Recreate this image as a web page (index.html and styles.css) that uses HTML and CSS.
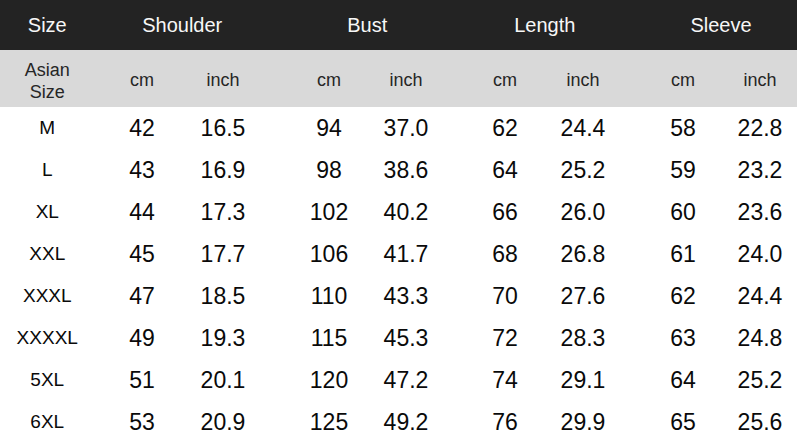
FILE: index.html
```html
<!DOCTYPE html>
<html>
<head>
<meta charset="utf-8">
<link rel="stylesheet" href="styles.css">
</head>
<body>
<div class="table">
  <div class="row head">
    <div class="c">Size</div>
    <div class="c span g1">Shoulder</div>
    <div class="c span g2">Bust</div>
    <div class="c span g3">Length</div>
    <div class="c span g4">Sleeve</div>
  </div>
  <div class="row units">
    <div class="c asian">Asian<br>Size</div>
    <div class="c">cm</div><div class="c">inch</div>
    <div class="c">cm</div><div class="c">inch</div>
    <div class="c">cm</div><div class="c">inch</div>
    <div class="c">cm</div><div class="c">inch</div>
  </div>
  <div class="row data"><div class="c sz">M</div><div class="c">42</div><div class="c">16.5</div><div class="c">94</div><div class="c">37.0</div><div class="c">62</div><div class="c">24.4</div><div class="c">58</div><div class="c">22.8</div></div>
  <div class="row data"><div class="c sz">L</div><div class="c">43</div><div class="c">16.9</div><div class="c">98</div><div class="c">38.6</div><div class="c">64</div><div class="c">25.2</div><div class="c">59</div><div class="c">23.2</div></div>
  <div class="row data"><div class="c sz">XL</div><div class="c">44</div><div class="c">17.3</div><div class="c">102</div><div class="c">40.2</div><div class="c">66</div><div class="c">26.0</div><div class="c">60</div><div class="c">23.6</div></div>
  <div class="row data"><div class="c sz">XXL</div><div class="c">45</div><div class="c">17.7</div><div class="c">106</div><div class="c">41.7</div><div class="c">68</div><div class="c">26.8</div><div class="c">61</div><div class="c">24.0</div></div>
  <div class="row data"><div class="c sz">XXXL</div><div class="c">47</div><div class="c">18.5</div><div class="c">110</div><div class="c">43.3</div><div class="c">70</div><div class="c">27.6</div><div class="c">62</div><div class="c">24.4</div></div>
  <div class="row data"><div class="c sz">XXXXL</div><div class="c">49</div><div class="c">19.3</div><div class="c">115</div><div class="c">45.3</div><div class="c">72</div><div class="c">28.3</div><div class="c">63</div><div class="c">24.8</div></div>
  <div class="row data"><div class="c sz">5XL</div><div class="c">51</div><div class="c">20.1</div><div class="c">120</div><div class="c">47.2</div><div class="c">74</div><div class="c">29.1</div><div class="c">64</div><div class="c">25.2</div></div>
  <div class="row data"><div class="c sz">6XL</div><div class="c">53</div><div class="c">20.9</div><div class="c">125</div><div class="c">49.2</div><div class="c">76</div><div class="c">29.9</div><div class="c">65</div><div class="c">25.6</div></div>
</div>
</body>
</html>
```

FILE: styles.css
```css
html, body {
  margin: 0;
  padding: 0;
  background: #ffffff;
}

body {
  font-family: "Liberation Sans", Arial, sans-serif;
  width: 797px;
  height: 444px;
  overflow: hidden;
}

.table {
  display: flex;
  flex-direction: column;
}

.row {
  display: grid;
  grid-template-columns: 94.5px 88px 93.5px 91.5px 88px 88.5px 89px 88.5px 75.5px;
  align-items: center;
}

.c {
  text-align: center;
  white-space: nowrap;
}

.span {
  grid-column: span 2;
}

.head {
  height: 50px;
  background: #232323;
  color: #f7f7f7;
  font-size: 20px;
}

.head .g1 { padding-right: 6px; }
.head .g2 { padding-left: 3px; }
.head .g3 { padding-left: 1px; }
.head .g4 { padding-left: 12px; }

.units {
  height: 57px;
  box-sizing: border-box;
  padding-top: 4px;
  background: #d9d9d9;
  color: #262626;
  font-size: 18px;
}

.asian {
  line-height: 22px;
}

.data {
  height: 42px;
  color: #0a0a0a;
  font-size: 23px;
}

.data .sz {
  font-size: 19px;
}

.units .c:nth-child(2), .data .c:nth-child(2) { padding-left: 7px; }
.units .c:nth-child(3), .data .c:nth-child(3) { padding-right: 12.5px; }
.units .c:nth-child(4), .data .c:nth-child(4) { padding-left: 14.5px; }
.units .c:nth-child(5), .data .c:nth-child(5) { padding-right: 11px; }
.units .c:nth-child(6), .data .c:nth-child(6) { padding-left: 10.5px; }
.units .c:nth-child(7), .data .c:nth-child(7) { padding-right: 11px; }
.units .c:nth-child(8), .data .c:nth-child(8) { padding-left: 11.5px; }
.units .c:nth-child(9), .data .c:nth-child(9) { padding-left: 1.5px; }
```
